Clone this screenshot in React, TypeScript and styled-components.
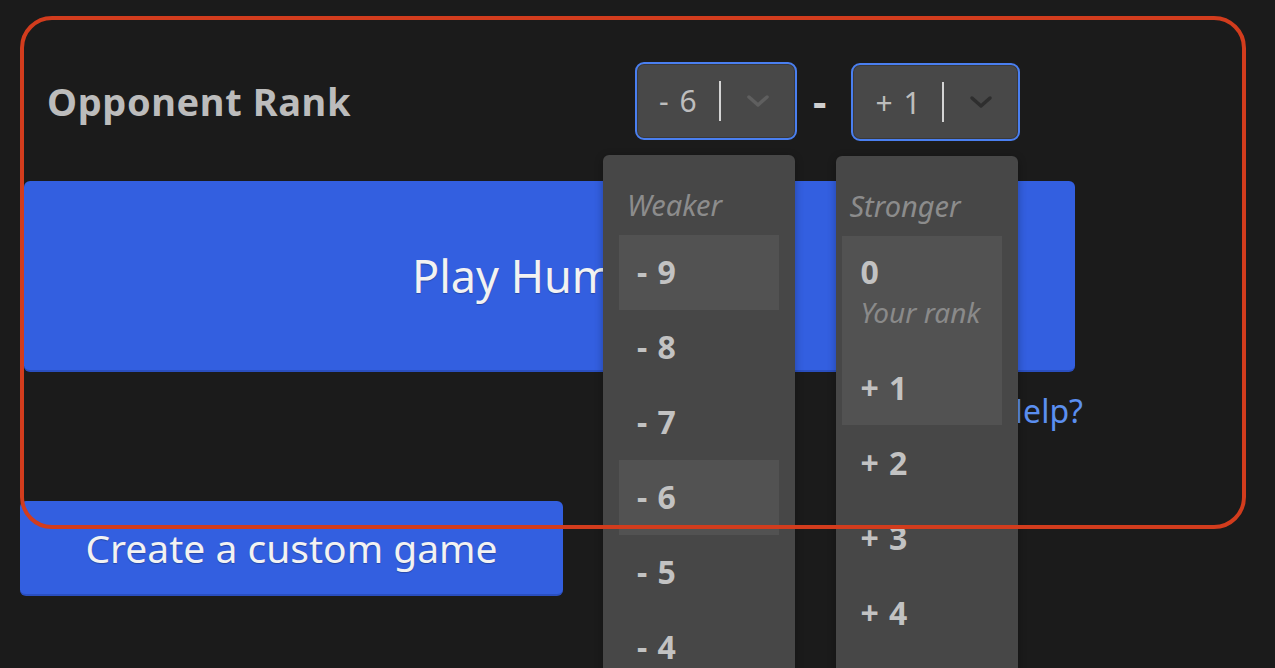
import styled, { createGlobalStyle } from "styled-components";

const GlobalStyle = createGlobalStyle`
  html, body {
    margin: 0;
    padding: 0;
    background: #1b1b1b;
    overflow: hidden;
    height: 100%;
  }
  body {
    font-family: "Noto Sans", "Liberation Sans", sans-serif;
  }
`;

const Page = styled.div`
  position: relative;
  padding: 0 20px;
  height: 668px;
`;

// red highlight frame drawn over the panel
const Annotation = styled.div`
  position: absolute;
  left: 20px;
  top: 16px;
  width: 1226px;
  height: 513px;
  box-sizing: border-box;
  border: 4px solid #d23c1d;
  border-radius: 32px;
  pointer-events: none;
  z-index: 10;
`;

const Panel = styled.div`
  width: 1063px;
  display: flex;
  flex-direction: column;
`;

const RankRow = styled.div`
  display: grid;
  grid-template-columns: 615px auto;
  align-items: center;
  padding-top: 60px;
`;

const Label = styled.h2`
  margin: 0 0 0 27px;
  font-size: 38px;
  font-weight: 700;
  color: #bcbcbc;
  letter-spacing: 0.6px;
`;

const Selects = styled.div`
  display: flex;
  align-items: center;
`;

const SelectWrap = styled.div`
  position: relative;
`;

const SelectBox = styled.div<{ $width: number; $offset?: number }>`
  box-sizing: border-box;
  width: ${(p) => p.$width}px;
  height: 78px;
  margin-top: ${(p) => p.$offset ?? 0}px;
  display: flex;
  align-items: center;
  border: 2px solid #4a7ff0;
  border-radius: 9px;
  background: #484848;
  box-shadow: inset 0 0 0 1px #3a3a3a;
`;

const Value = styled.span`
  flex: 1;
  padding-left: 22px;
  font-size: 30px;
  word-spacing: 3px;
  color: #bdbdbd;
`;

const Divider = styled.span`
  width: 2px;
  height: 40px;
  background: #d4d4d4;
`;

const Indicator = styled.span<{ $tone: string }>`
  width: 74px;
  display: flex;
  justify-content: center;
  color: ${(p) => p.$tone};
`;

const Dash = styled.span`
  margin: 0 25px 0 16px;
  font-size: 42px;
  font-weight: 700;
  color: #cfcfcf;
  line-height: 1;
`;

const Menu = styled.div<{ $left: number; $width: number; $inset: number }>`
  position: absolute;
  left: ${(p) => p.$left}px;
  top: calc(100% + 15px);
  width: ${(p) => p.$width}px;
  box-sizing: border-box;
  padding: 0 16px 0 ${(p) => p.$inset}px;
  background: #474747;
  border-radius: 6px 6px 0 0;
  box-shadow: 0 2px 8px rgba(0, 0, 0, 0.3);
  z-index: 5;
`;

const MenuHeader = styled.div<{ $indent: number }>`
  height: 80px;
  box-sizing: border-box;
  padding: 31px 0 0 ${(p) => p.$indent}px;
  font-size: 29px;
  font-style: italic;
  color: #8c8c8c;
  line-height: 38px;
`;

const Option = styled.div<{ $active?: boolean; $tall?: boolean }>`
  height: ${(p) => (p.$tall ? 114 : 75)}px;
  box-sizing: border-box;
  padding: ${(p) => (p.$tall ? "15px" : "0")} 0 0 18px;
  display: flex;
  flex-direction: column;
  justify-content: ${(p) => (p.$tall ? "flex-start" : "center")};
  background: ${(p) => (p.$active ? "#525252" : "transparent")};
  font-size: 32px;
  font-weight: 700;
  word-spacing: 2px;
  color: #c2c2c2;
  line-height: 42px;
`;

const Hint = styled.span`
  margin-top: 0;
  font-size: 28px;
  font-weight: 400;
  font-style: italic;
  color: #8a8a8a;
  line-height: 38px;
  word-spacing: 0;
`;

const PrimaryButton = styled.button<{ $width: number; $height: number; $size: number }>`
  box-sizing: border-box;
  width: ${(p) => p.$width}px;
  height: ${(p) => p.$height}px;
  border: none;
  border-bottom: 2px solid #2a4fc0;
  border-radius: 6px;
  background: #335fe0;
  color: #f2f2f2;
  font-family: "Noto Sans", "Liberation Sans", sans-serif;
  font-size: ${(p) => p.$size}px;
  text-shadow: 0 1px 1px rgba(0, 0, 0, 0.25);
  cursor: pointer;
`;

const PlayButton = styled(PrimaryButton)`
  margin: 40px 0 0 4px;
  padding-right: 26px;
`;

const CreateButton = styled(PrimaryButton)`
  margin-top: 70px;
`;

const HelpRow = styled.div`
  display: flex;
  justify-content: flex-end;
  margin-top: 19px;
`;

const HelpLink = styled.a`
  font-size: 32px;
  color: #5b8ff0;
  line-height: 40px;
  text-decoration: none;
`;

function Chevron() {
  return (
    <svg width="24" height="14" viewBox="0 0 24 14" fill="none">
      <polyline
        points="3,3 12,11 21,3"
        stroke="currentColor"
        strokeWidth="3.5"
        strokeLinecap="round"
        strokeLinejoin="round"
      />
    </svg>
  );
}

const weaker = ["- 9", "- 8", "- 7", "- 6", "- 5", "- 4", "- 3"];
const stronger = ["+ 1", "+ 2", "+ 3", "+ 4", "+ 5"];

export default function App() {
  return (
    <>
      <GlobalStyle />
      <Page>
        <Annotation />
        <Panel>
          <RankRow>
            <Label>Opponent Rank</Label>
            <Selects>
              <SelectWrap>
                <SelectBox $width={162}>
                  <Value>- 6</Value>
                  <Divider />
                  <Indicator $tone="#5f5f5f">
                    <Chevron />
                  </Indicator>
                </SelectBox>
                <Menu $left={-32} $width={192} $inset={16}>
                  <MenuHeader $indent={8}>Weaker</MenuHeader>
                  {weaker.map((r) => (
                    <Option key={r} $active={r === "- 9" || r === "- 6"}>
                      {r}
                    </Option>
                  ))}
                </Menu>
              </SelectWrap>
              <Dash>-</Dash>
              <SelectWrap>
                <SelectBox $width={169} $offset={3}>
                  <Value>+ 1</Value>
                  <Divider />
                  <Indicator $tone="#2e2e2e">
                    <Chevron />
                  </Indicator>
                </SelectBox>
                <Menu $left={-15} $width={182} $inset={6}>
                  <MenuHeader $indent={7}>Stronger</MenuHeader>
                  <Option $active $tall>
                    0<Hint>Your rank</Hint>
                  </Option>
                  {stronger.map((r) => (
                    <Option key={r} $active={r === "+ 1"}>
                      {r}
                    </Option>
                  ))}
                </Menu>
              </SelectWrap>
            </Selects>
          </RankRow>
          <PlayButton $width={1051} $height={191} $size={45}>
            Play Human
          </PlayButton>
          <HelpRow>
            <HelpLink href="#">Need Help?</HelpLink>
          </HelpRow>
        </Panel>
        <CreateButton $width={543} $height={95} $size={39}>
          Create a custom game
        </CreateButton>
      </Page>
    </>
  );
}
